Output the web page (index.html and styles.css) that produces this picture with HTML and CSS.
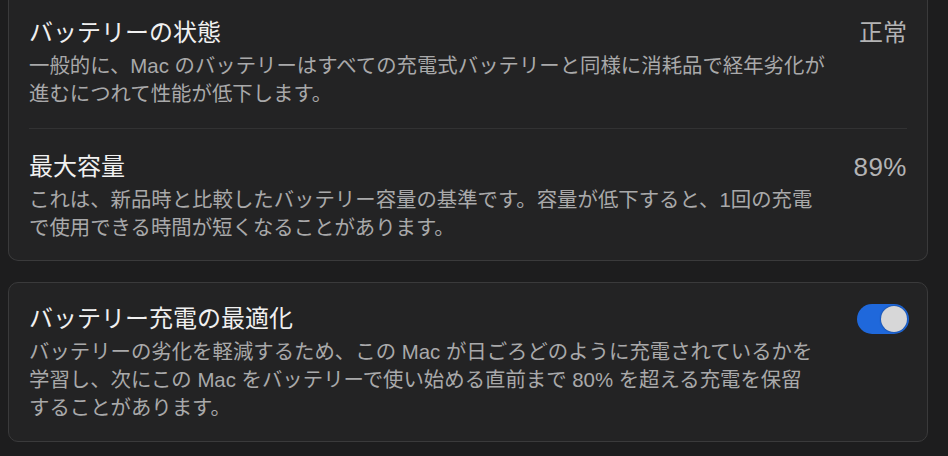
FILE: index.html
```html
<!DOCTYPE html>
<html lang="ja">
<head>
<meta charset="utf-8">
<link rel="stylesheet" href="styles.css">
</head>
<body>
<main class="page">
  <section class="card card-top">
    <div class="row">
      <div class="row-text">
        <div class="title">バッテリーの状態</div>
        <p class="desc">一般的に、Mac のバッテリーはすべての充電式バッテリーと同様に消耗品で経年劣化が<br>進むにつれて性能が低下します。</p>
      </div>
      <div class="value">正常</div>
    </div>
    <div class="divider"></div>
    <div class="row row-second">
      <div class="row-text">
        <div class="title">最大容量</div>
        <p class="desc">これは、新品時と比較したバッテリー容量の基準です。容量が低下すると、1回の充電<br>で使用できる時間が短くなることがあります。</p>
      </div>
      <div class="value value-num">89%</div>
    </div>
  </section>
  <section class="card card-bottom">
    <div class="row">
      <div class="row-text">
        <div class="title">バッテリー充電の最適化</div>
        <p class="desc">バッテリーの劣化を軽減するため、この Mac が日ごろどのように充電されているかを<br>学習し、次にこの Mac をバッテリーで使い始める直前まで 80% を超える充電を保留<br>することがあります。</p>
      </div>
      <div class="toggle"><span class="knob"></span></div>
    </div>
  </section>
</main>
</body>
</html>
```
FILE: styles.css
```css
html, body {
  margin: 0;
  padding: 0;
}
body {
  background: #1d1d1e;
  font-family: "Liberation Sans", "Noto Sans CJK JP", sans-serif;
  width: 948px;
  height: 456px;
  overflow: hidden;
}
.page {
  padding: 0 20px 0 8px;
  display: flex;
  flex-direction: column;
  gap: 21px;
}
.card {
  background: #232324;
  border: 1px solid #3a3a3b;
  border-radius: 10px;
}
.card-top {
  border-top: none;
  border-top-left-radius: 0;
  border-top-right-radius: 0;
}
.row {
  display: flex;
  justify-content: space-between;
  align-items: flex-start;
  padding: 18px 20px 20px 20px;
}
.row-second {
  padding: 23px 20px 18px 20px;
}
.card-bottom .row {
  padding: 21px 20px 19px 20px;
}
.row-text {
  display: flex;
  flex-direction: column;
  gap: 4px;
}
.title {
  font-size: 24px;
  line-height: 30px;
  color: #f0f0f0;
  font-weight: 400;
  white-space: nowrap;
}
.desc {
  margin: 0;
  font-size: 20.4px;
  line-height: 28px;
  color: #a9a9aa;
  white-space: nowrap;
}
.value {
  font-size: 24px;
  line-height: 30px;
  color: #b3b3b4;
}
.value-num {
  font-size: 26px;
  letter-spacing: 0.5px;
}
.divider {
  height: 1px;
  background: #323233;
  margin: 0 20px;
}
.toggle {
  width: 52px;
  height: 30px;
  border-radius: 15px;
  background: #1f68db;
  display: flex;
  align-items: center;
  justify-content: flex-end;
  padding: 0 2px;
  box-sizing: border-box;
  margin-right: -2px;
}
.knob {
  width: 26px;
  height: 26px;
  border-radius: 50%;
  background: #d7d7d8;
  box-shadow: 0 0 2px rgba(0, 0, 0, 0.5);
}
```
